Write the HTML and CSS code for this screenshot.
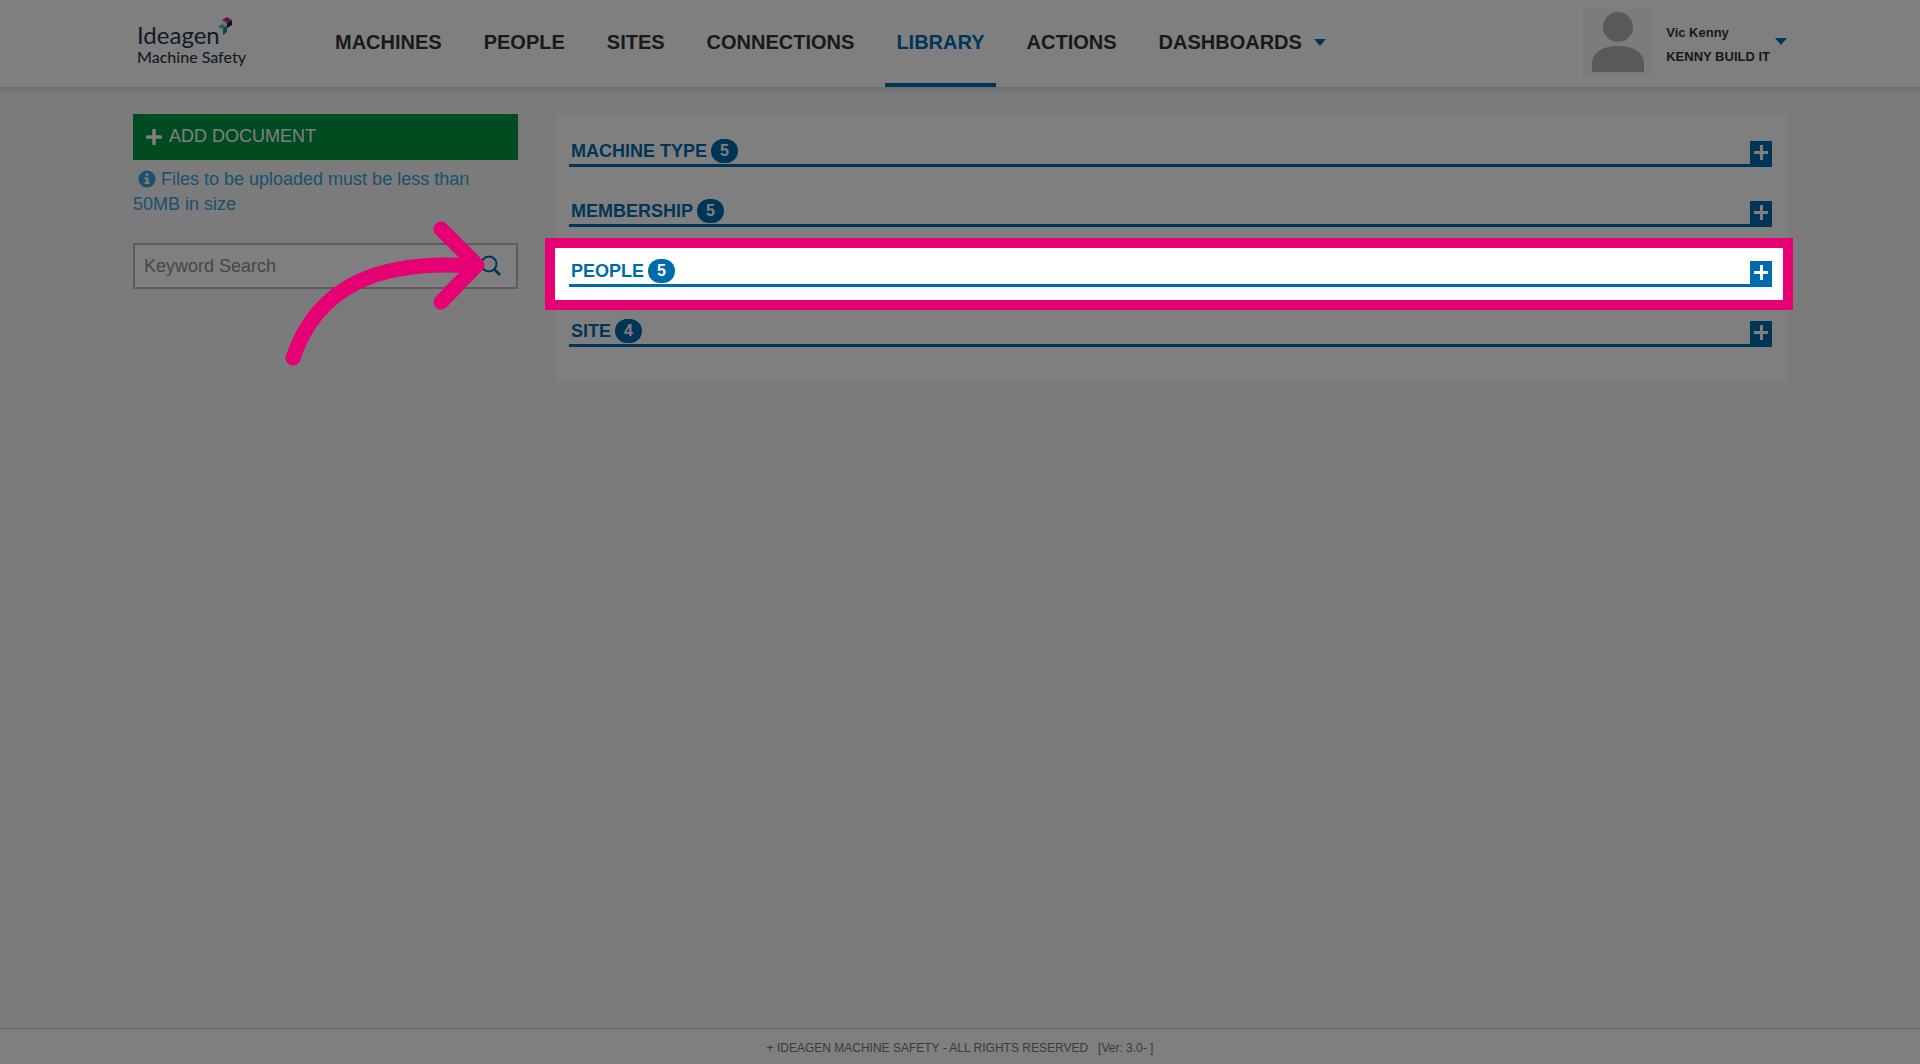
FILE: index.html
```html
<!DOCTYPE html>
<html lang="en">
<head>
<meta charset="UTF-8">
<meta name="viewport" content="width=device-width, initial-scale=1.0">
<title>Library - Ideagen Machine Safety</title>
<link rel="stylesheet" href="styles.css">
</head>
<body>
<header class="site-header">
    <a href="#" class="logo">
        <span class="logo-name">Ideagen
            <svg class="logo-mark" width="14" height="19" viewBox="0 0 14 19" aria-hidden="true">
                <path d="M4 3 9 0l5 3-5 3z" fill="#d6257c"/>
                <path d="M9 6l5-3v5L9 11z" fill="#1b2540"/>
                <path d="M4 3l5 3v3L4 6z" fill="#f3d5e2"/>
                <path d="M0 10l4-3 5 3-4 2z" fill="#3fc0c4"/>
                <path d="M5 12l4-3v6l-4 3z" fill="#0d8ca5"/>
            </svg>
        </span>
        <span class="logo-product">Machine Safety</span>
    </a>
    <nav class="main-nav">
        <a href="#">MACHINES</a>
        <a href="#">PEOPLE</a>
        <a href="#">SITES</a>
        <a href="#">CONNECTIONS</a>
        <a href="#" class="active">LIBRARY</a>
        <a href="#">ACTIONS</a>
        <a href="#">DASHBOARDS <span class="caret"></span></a>
    </nav>
    <button type="button" class="user-menu">
        <svg class="avatar" width="70" height="70" viewBox="0 0 70 70" aria-hidden="true">
            <rect width="70" height="70" fill="#f9f9f9"/>
            <circle cx="35" cy="20" r="15" fill="#b2b2b2"/>
            <path d="M9 65V57C9 45 20 39 35 39s26 6 26 18v8z" fill="#b2b2b2"/>
        </svg>
        <span class="user-text">
            <span>Vic Kenny</span>
            <span>KENNY BUILD IT</span>
        </span>
        <span class="caret"></span>
    </button>
</header>

<main class="content">
    <aside class="sidebar">
        <button type="button" class="add-button">
            <svg width="16" height="16" viewBox="0 0 16 16" aria-hidden="true"><path d="M8 1.5v13M1.5 8h13" stroke="#fff" stroke-width="3.6" stroke-linecap="round"/></svg>
            ADD DOCUMENT
        </button>
        <p class="file-note">
            <svg width="18" height="18" viewBox="0 0 18 18" aria-hidden="true">
                <circle cx="9" cy="9" r="8.6" fill="#36a3dc"/>
                <path d="M7.5 3.5h3v2.3h-3zM6.5 7.2h4v5h1.2v1.9H6.5v-1.9h1.2V9.1H6.5z" fill="#f6f6f6"/>
            </svg>
            Files to be uploaded must be less than 50MB in size
        </p>
        <form class="search-box">
            <input type="text" placeholder="Keyword Search" aria-label="Keyword Search">
            <button type="button" aria-label="Search">
                <svg width="20" height="22" viewBox="0 0 20 22" aria-hidden="true"><circle cx="8" cy="9" r="7.5" fill="none" stroke="#006aaf" stroke-width="2"/><path d="M13 14l6 6" stroke="#006aaf" stroke-width="2.6"/></svg>
            </button>
        </form>
        <svg class="tour-arrow" width="204" height="150" viewBox="0 0 204 150" aria-hidden="true">
            <path d="M8 138C32 67 92 39 189 46M156 9l36 36-36 37" fill="none" stroke="#e60073" stroke-width="15" stroke-linecap="round" stroke-linejoin="round"/>
        </svg>
    </aside>

    <section class="library">
        <button type="button" class="group">
            <span class="group-name">MACHINE TYPE</span>
            <span class="badge">5</span>
            <span class="toggle"></span>
        </button>
        <button type="button" class="group">
            <span class="group-name">MEMBERSHIP</span>
            <span class="badge">5</span>
            <span class="toggle"></span>
        </button>
        <button type="button" class="group">
            <span class="group-name">PEOPLE</span>
            <span class="badge">5</span>
            <span class="toggle"></span>
            <span class="spotlight"></span>
        </button>
        <button type="button" class="group">
            <span class="group-name">SITE</span>
            <span class="badge">4</span>
            <span class="toggle"></span>
        </button>
    </section>
</main>

<footer class="site-footer">
    <span>+ IDEAGEN MACHINE SAFETY - ALL RIGHTS RESERVED</span>
    <span>[Ver: 3.0- ]</span>
</footer>
</body>
</html>
```
FILE: styles.css
```css
* {
    box-sizing: border-box;
}
body {
    margin: 0;
    min-height: 100vh;
    display: flex;
    flex-direction: column;
    background-color: #f6f6f6;
    color: #333;
    font-family: "Liberation Sans", Arial, sans-serif;
    font-size: 18px;
}
a {
    color: inherit;
    text-decoration: none;
}
button {
    font: inherit;
    color: inherit;
    border: none;
    background: none;
    padding: 0;
    cursor: pointer;
}

/* header */
.site-header {
    display: flex;
    align-items: center;
    height: 87px;
    padding: 0 133px;
    background-color: #fff;
    box-shadow: 0 1px 8px rgba(0, 0, 0, 0.2);
}
.logo {
    display: flex;
    flex-direction: column;
    width: 191px;
    padding: 3px 0 0 4px;
    color: #26364f;
    font-family: Lato, sans-serif;
}
.logo-name {
    display: flex;
    font-size: 24px;
    line-height: 24px;
}
.logo-mark {
    margin: -6px 0 0 -2px;
}
.logo-product {
    font-size: 16px;
    font-weight: 500;
    line-height: 20px;
}
.main-nav {
    display: flex;
    align-self: stretch;
    gap: 20px;
    font-size: 20px;
    font-weight: bold;
}
.main-nav a {
    display: flex;
    align-items: center;
    padding: 0 11px;
    border-top: 2px solid transparent;
    border-bottom: 4px solid transparent;
}
.main-nav .active {
    color: #006aaf;
    border-bottom-color: #006aaf;
}
.caret {
    border: 6px solid transparent;
    border-top: 7px solid #006aaf;
    border-bottom: none;
}
.main-nav .caret {
    margin-left: 12px;
}
.user-menu {
    display: flex;
    align-items: center;
    margin-left: auto;
    padding-bottom: 4px;
    font-size: 13px;
    font-weight: bold;
    line-height: 24px;
    text-align: left;
}
.user-text {
    display: flex;
    flex-direction: column;
    padding: 6px 5px 0 13px;
}

/* page content */
.content {
    flex: 1;
    display: grid;
    grid-template-columns: 385px 1fr;
    align-items: start;
    gap: 38px;
    padding: 27px 133px;
}
.sidebar {
    position: relative;
}
.add-button {
    display: flex;
    align-items: center;
    gap: 7px;
    width: 100%;
    height: 46px;
    padding: 0 13px 1px;
    background-color: #009641;
    color: #fff;
}
.file-note {
    margin: 7px 0 26px;
    color: #36a3dc;
    line-height: 25px;
}
.file-note svg {
    margin-left: 5px;
    vertical-align: -3px;
}
.search-box {
    display: flex;
    height: 46px;
    border: 2px solid #b8b8b8;
    background-color: #fff;
}
.search-box input {
    flex: 1;
    min-width: 0;
    padding: 0 9px;
    border: none;
    background: none;
    font: inherit;
}
.search-box input::placeholder {
    color: #8c8c8c;
}
.search-box button {
    display: flex;
    align-items: center;
    padding: 0 15px;
}
.library {
    display: flex;
    flex-direction: column;
    gap: 31px;
    padding: 24px 15px 35px 13px;
    background-color: #fff;
}
.group {
    position: relative;
    display: flex;
    align-items: center;
    height: 29px;
    padding-left: 2px;
    border-bottom: 3px solid #006aaf;
    color: #006aaf;
    font-weight: bold;
}
.badge {
    margin-left: 4px;
    width: 27px;
    height: 24px;
    border-radius: 12px;
    background-color: #006aaf;
    color: #fff;
    font-size: 16px;
    line-height: 24px;
}
.toggle {
    margin-left: auto;
    width: 22px;
    height: 23px;
    background:
        linear-gradient(#fff, #fff) center / 14px 3px no-repeat,
        linear-gradient(#fff, #fff) center / 3px 15px no-repeat,
        #006aaf;
    align-self: flex-end;
}

/* tour overlay: frame around one group, everything else dimmed */
.spotlight {
    position: absolute;
    z-index: 10;
    inset: -20px -21px -26px -24px;
    border: 10px solid #e60073;
    box-shadow: 0 0 0 3000px rgba(0, 0, 0, 0.5);
    pointer-events: none;
}
.tour-arrow {
    position: absolute;
    z-index: 11;
    left: 152px;
    top: 106px;
    pointer-events: none;
}

.site-footer {
    display: flex;
    justify-content: center;
    gap: 10px;
    padding: 11px 0 8px;
    border-top: 1px solid #ccc;
    background-color: #fff;
    color: #777;
    font-size: 12px;
    line-height: 16px;
}
```
